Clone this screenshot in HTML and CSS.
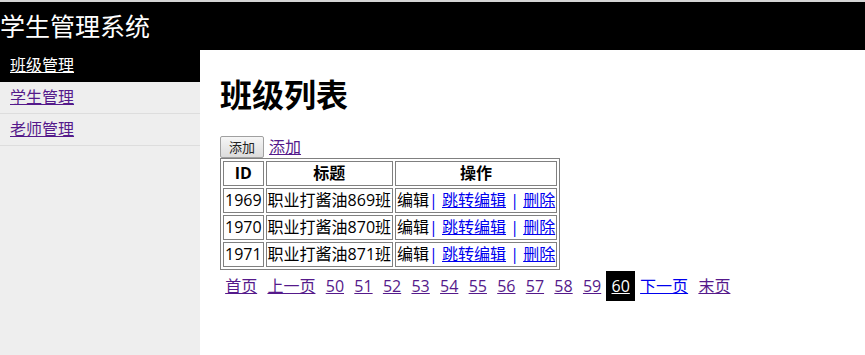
FILE: index.html
```html
<!DOCTYPE html>
<html lang="zh">
<head>
    <meta charset="UTF-8">
    <title>学生管理系统</title>
    <link rel="stylesheet" href="styles.css">
</head>
<body>
    <div class="header">学生管理系统</div>
    <div class="wrap">
        <!-- 左侧菜单 -->
        <div class="menu">
            <a class="item active" href="#">班级管理</a>
            <a class="item visited" href="#">学生管理</a>
            <a class="item visited" href="#">老师管理</a>
        </div>
        <!-- 内容区 -->
        <div class="content">
            <h1>班级列表</h1>
            <div class="tools">
                <button type="button">添加</button>
                <a class="visited" href="#">添加</a>
            </div>
            <table class="list">
                <tr>
                    <th>ID</th>
                    <th>标题</th>
                    <th>操作</th>
                </tr>
                <tr>
                    <td>1969</td>
                    <td>职业打酱油869班</td>
                    <td>编辑<span class="sep">|</span> <a href="#">跳转编辑</a> <span class="sep">|</span> <a href="#">删除</a></td>
                </tr>
                <tr>
                    <td>1970</td>
                    <td>职业打酱油870班</td>
                    <td>编辑<span class="sep">|</span> <a href="#">跳转编辑</a> <span class="sep">|</span> <a href="#">删除</a></td>
                </tr>
                <tr>
                    <td>1971</td>
                    <td>职业打酱油871班</td>
                    <td>编辑<span class="sep">|</span> <a href="#">跳转编辑</a> <span class="sep">|</span> <a href="#">删除</a></td>
                </tr>
            </table>
            <div class="pager"><a class="visited" href="#">首页</a><a class="visited" href="#">上一页</a><a class="visited" href="#">50</a><a class="visited" href="#">51</a><a class="visited" href="#">52</a><a class="visited" href="#">53</a><a class="visited" href="#">54</a><a class="visited" href="#">55</a><a class="visited" href="#">56</a><a class="visited" href="#">57</a><a class="visited" href="#">58</a><a class="visited" href="#">59</a><a class="current" href="#">60</a><a href="#">下一页</a><a class="visited" href="#">末页</a></div>
        </div>
    </div>
</body>
</html>
```

FILE: styles.css
```css
/* styles.css */
html, body {
height: 100%;
}

body {
margin: 0;
font-family: "Open Sans", "Noto Sans CJK SC", sans-serif;
font-size: 16px;
line-height: 21px;
display: flex;
flex-direction: column;
}

a {
color: #0000ee;
}

a.visited {
color: #551a8b;
}

.header {
border-top: 2px solid #d4d4d4;
background-color: #000;
color: #fff;
font-size: 25px;
height: 48px;
line-height: 48px;
}

.wrap {
flex: 1;
display: flex;
}

.menu {
width: 200px;
background-color: #eee;
}

.menu .item {
display: block;
padding: 5px 10px;
border-bottom: 1px solid #ddd;
}

.menu .item.active {
background-color: #000;
color: #fff;
border-bottom-color: #000;
}

.content {
flex: 1;
padding: 5px 20px;
}

h1 {
font-size: 32px;
line-height: 38px;
margin: 21px 0 21px;
}

.tools {
display: flex;
align-items: flex-end;
gap: 5px;
height: 23px;
}

button {
font-family: "Noto Sans CJK SC", sans-serif;
font-size: 13px;
line-height: 18px;
padding: 1px 8px;
height: 22px;
border: 1px solid #a0a0a0;
border-radius: 2px;
background: linear-gradient(#f6f6f6, #dcdcdc);
color: #222;
}

.list {
border: 1px solid #808080;
border-spacing: 2px;
}

.list th,
.list td {
border: 1px solid #808080;
padding: 1px;
line-height: 21px;
}

.list td {
text-align: left;
}

.list td:first-child {
text-align: center;
}

.sep {
color: #0000ee;
}

.pager {
display: flex;
margin-top: 1px;
}

.pager a {
padding: 5px 5.15px;
line-height: 20px;
}

.pager a.current {
background-color: #000;
color: #fff;
}
```
